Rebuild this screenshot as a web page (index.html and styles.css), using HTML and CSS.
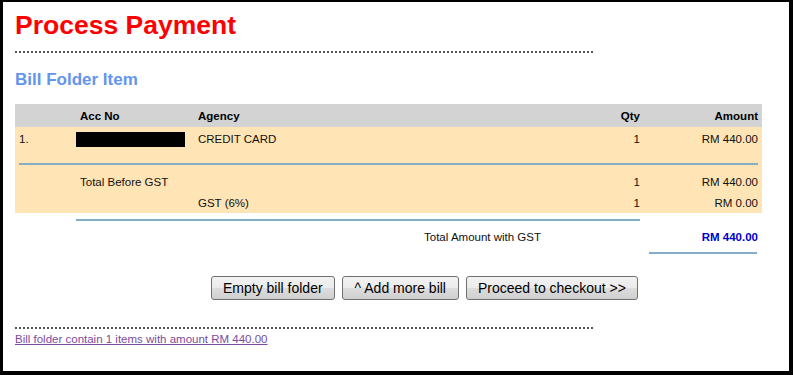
FILE: index.html
```html
<!DOCTYPE html>
<html lang="en">
<head>
  <meta charset="UTF-8" />
  <title>Process Payment</title>
  <link rel="stylesheet" href="styles.css">
</head>
<body>
  <div class="frame">
    <h1 class="title">Process Payment</h1>
    <div class="dots"></div>
    <h2 class="section">Bill Folder Item</h2>
    <table class="bill">
      <colgroup>
        <col class="c-no"><col class="c-acc"><col class="c-agency"><col class="c-qty"><col class="c-amt">
      </colgroup>
      <thead>
        <tr><th></th><th>Acc No</th><th>Agency</th><th class="num">Qty</th><th class="num">Amount</th></tr>
      </thead>
      <tbody>
        <tr class="item row1">
          <td>1.</td><td><span class="redact"></span></td><td>CREDIT CARD</td><td class="num">1</td><td class="num">RM 440.00</td>
        </tr>
        <tr class="item sep">
          <td colspan="5"><div class="rule"></div></td>
        </tr>
        <tr class="item sub1">
          <td></td><td>Total Before GST</td><td></td><td class="num">1</td><td class="num">RM 440.00</td>
        </tr>
        <tr class="item sub2">
          <td></td><td></td><td>GST (6%)</td><td class="num">1</td><td class="num">RM 0.00</td>
        </tr>
        <tr class="line1">
          <td></td><td colspan="3" class="to-qty"><div class="rule"></div></td><td></td>
        </tr>
        <tr class="grand">
          <td></td><td></td><td class="num">Total Amount with GST</td><td></td><td class="num grand-amt">RM 440.00</td>
        </tr>
        <tr class="line2">
          <td colspan="4"></td><td class="amt-rule"><div class="rule"></div></td>
        </tr>
      </tbody>
    </table>
    <div class="actions">
      <button type="button" class="btn">Empty bill folder</button>
      <button type="button" class="btn">^ Add more bill</button>
      <button type="button" class="btn">Proceed to checkout &gt;&gt;</button>
    </div>
    <div class="dots bottom"></div>
    <a class="summary" href="#">Bill folder contain 1 items with amount RM 440.00</a>
  </div>
</body>
</html>
```

FILE: styles.css
```css
html {
  background: #000;
}
body {
  margin: 0;
  padding: 2px 4px 4px 3px;
  font-family: "Liberation Sans", Arial, sans-serif;
  font-size: 11.5px;
  color: #111;
}
.frame {
  background: #fff;
  height: 369px;
  box-sizing: border-box;
  padding: 8px 0 0 12px;
  overflow: hidden;
}
.title {
  margin: 0;
  font-size: 26.5px;
  line-height: 30px;
  font-weight: bold;
  color: #f00;
}
.dots {
  width: 580px;
  height: 2px;
  margin-top: 11px;
  background-image: linear-gradient(to right, #555 50%, transparent 50%);
  background-size: 4px 2px;
}
.section {
  margin: 17px 0 0;
  font-size: 17px;
  line-height: 20px;
  font-weight: bold;
  color: #6495ed;
}
.bill {
  margin-top: 14px;
  width: 747px;
  table-layout: fixed;
  border-collapse: collapse;
  border-spacing: 0;
}
.c-no { width: 61px; }
.c-acc { width: 118px; }
.c-agency { width: 351px; }
.c-qty { width: 99px; }
.c-amt { width: 118px; }
.bill th {
  background: #d3d3d3;
  height: 23px;
  padding: 0 4px;
  text-align: left;
  font-weight: bold;
  color: #000;
}
.bill td {
  padding: 0 4px;
  vertical-align: middle;
  white-space: nowrap;
}
.bill .num {
  text-align: right;
}
.item td {
  background: #ffe4b5;
}
.row1 td { height: 24px; }
.sub1 td { height: 23px; }
.sub2 td { height: 20px; }
.redact {
  display: block;
  width: 109px;
  height: 15px;
  margin-left: -4px;
  background: #000;
}
.rule {
  height: 2px;
  background: #86adc6;
}
.sep td {
  height: 19px;
  padding: 12px 4px 0;
  box-sizing: border-box;
  vertical-align: top;
}
.line1 td {
  height: 12px;
  padding: 6px 0 0;
  box-sizing: border-box;
  vertical-align: top;
}
.line1 .to-qty {
  padding-right: 4px;
}
.grand td {
  height: 24px;
}
.grand-amt {
  font-weight: bold;
  color: #00c;
}
.line2 td {
  height: 7px;
  padding: 3px 0 0;
  box-sizing: border-box;
  vertical-align: top;
}
.line2 .amt-rule {
  padding: 3px 5px 0;
}
.actions {
  display: flex;
  gap: 7px;
  margin: 20px 0 0 196px;
}
.btn {
  height: 24px;
  padding: 0 11px;
  border: 1px solid #707070;
  border-radius: 3px;
  background: linear-gradient(#f2f2f2 0%, #ebebeb 50%, #dddddd 51%, #cfcfcf 100%);
  font-family: "Liberation Sans", Arial, sans-serif;
  font-size: 14px;
  color: #000;
}
.btn:nth-child(2) {
  padding: 0 12px;
}
.dots.bottom {
  margin-top: 27px;
}
.summary {
  display: inline-block;
  margin-top: 3px;
  line-height: 14px;
  color: #7d4b9e;
}
```
